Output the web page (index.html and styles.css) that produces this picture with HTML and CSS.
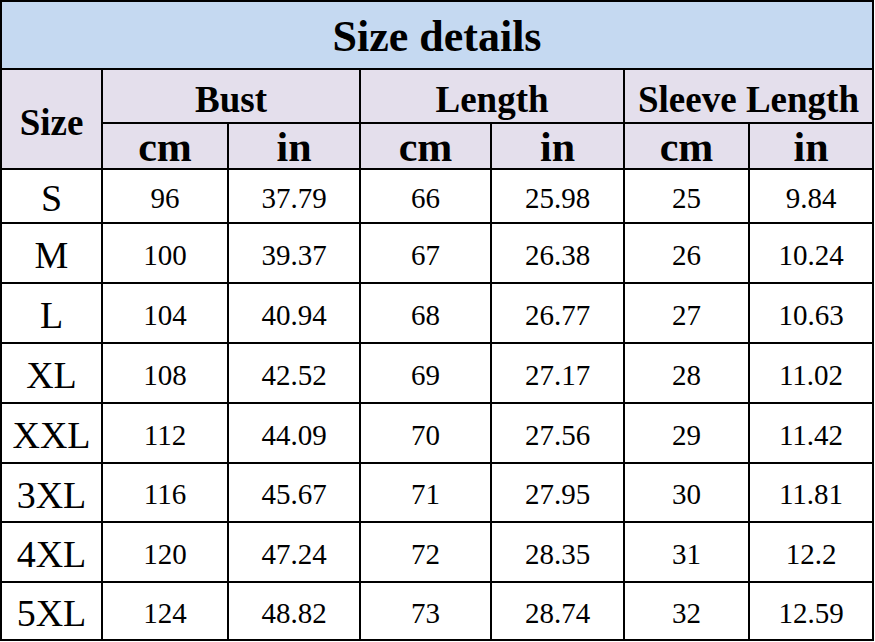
FILE: index.html
```html
<!DOCTYPE html>
<html>
<head>
<meta charset="utf-8">
<link rel="stylesheet" href="styles.css">
</head>
<body>
<div class="chart">
  <div class="cell title">Size details</div>
  <div class="cell head size-head">Size</div>
  <div class="cell head group span2">Bust</div>
  <div class="cell head group span2">Length</div>
  <div class="cell head group span2">Sleeve Length</div>
  <div class="cell head unit">cm</div>
  <div class="cell head unit">in</div>
  <div class="cell head unit">cm</div>
  <div class="cell head unit">in</div>
  <div class="cell head unit">cm</div>
  <div class="cell head unit">in</div>

  <div class="cell size">S</div><div class="cell num">96</div><div class="cell num">37.79</div><div class="cell num">66</div><div class="cell num">25.98</div><div class="cell num">25</div><div class="cell num">9.84</div>
  <div class="cell size">M</div><div class="cell num">100</div><div class="cell num">39.37</div><div class="cell num">67</div><div class="cell num">26.38</div><div class="cell num">26</div><div class="cell num">10.24</div>
  <div class="cell size">L</div><div class="cell num">104</div><div class="cell num">40.94</div><div class="cell num">68</div><div class="cell num">26.77</div><div class="cell num">27</div><div class="cell num">10.63</div>
  <div class="cell size">XL</div><div class="cell num">108</div><div class="cell num">42.52</div><div class="cell num">69</div><div class="cell num">27.17</div><div class="cell num">28</div><div class="cell num">11.02</div>
  <div class="cell size">XXL</div><div class="cell num">112</div><div class="cell num">44.09</div><div class="cell num">70</div><div class="cell num">27.56</div><div class="cell num">29</div><div class="cell num">11.42</div>
  <div class="cell size">3XL</div><div class="cell num">116</div><div class="cell num">45.67</div><div class="cell num">71</div><div class="cell num">27.95</div><div class="cell num">30</div><div class="cell num">11.81</div>
  <div class="cell size">4XL</div><div class="cell num">120</div><div class="cell num">47.24</div><div class="cell num">72</div><div class="cell num">28.35</div><div class="cell num">31</div><div class="cell num">12.2</div>
  <div class="cell size">5XL</div><div class="cell num">124</div><div class="cell num">48.82</div><div class="cell num">73</div><div class="cell num">28.74</div><div class="cell num">32</div><div class="cell num">12.59</div>
</div>
</body>
</html>
```

FILE: styles.css
```css
html, body {
  margin: 0;
  padding: 0;
  background: #ffffff;
}

.chart {
  width: 870px;
  display: grid;
  grid-template-columns: 99px 124px 130px 129px 131px 123px 122px;
  grid-template-rows: 66px 52px 44px 52px 58px 58px 58px 58px 57px 58px 56px;
  gap: 2px;
  padding: 2px;
  background: #000000;
  font-family: "Liberation Serif", "DejaVu Serif", serif;
  color: #000000;
}

.cell {
  background: #ffffff;
  display: flex;
  align-items: center;
  justify-content: center;
  line-height: 1;
  white-space: nowrap;
}

.title {
  grid-column: 1 / -1;
  background: #c5d9f1;
  font-size: 44px;
  font-weight: bold;
  padding-top: 3px;
}

.head {
  background: #e4dfec;
  font-weight: bold;
}

.size-head {
  grid-row: 2 / 4;
  font-size: 37px;
  padding-top: 6px;
}

.span2 {
  grid-column: span 2;
}

.group {
  font-size: 37px;
  padding-top: 6px;
}

.unit {
  font-size: 42px;
  align-items: flex-end;
  padding-bottom: 0;
}

.size {
  font-size: 38px;
  padding-top: 4px;
}

.num {
  font-size: 29px;
  padding-top: 4px;
}
```
